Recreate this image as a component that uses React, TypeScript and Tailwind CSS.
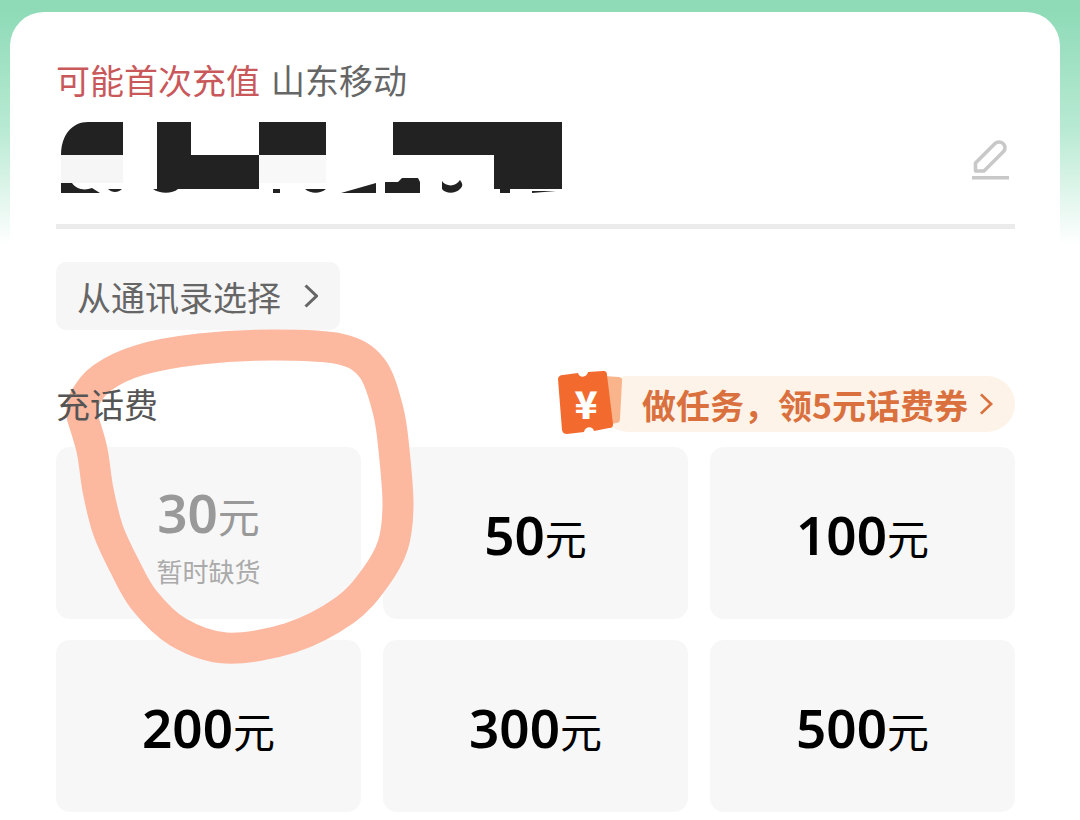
const cjk = "font-['Noto_Sans_CJK_SC','Noto_Sans',sans-serif]"

const amounts = [
  { value: '30', note: '暂时缺货' },
  { value: '50' },
  { value: '100' },
  { value: '200' },
  { value: '300' },
  { value: '500' },
]

// hand-drawn ring, traced from the marker stroke
const ringPoints = [
  [82, 416], [92, 450], [98, 490], [108, 530], [124, 565], [144, 600], [178, 632], [226, 648], [290, 638], [345, 610],
  [375, 578], [393, 545], [398, 505], [394, 450], [388, 410], [372, 368], [340, 349], [273, 345], [200, 349], [140, 360], [102, 378], [84, 400], [82, 416],
]

function smoothPath(pts: number[][]) {
  let d = `M${pts[0][0]} ${pts[0][1]}`
  for (let i = 0; i < pts.length - 1; i++) {
    const p0 = pts[Math.max(i - 1, 0)]
    const p1 = pts[i]
    const p2 = pts[i + 1]
    const p3 = pts[Math.min(i + 2, pts.length - 1)]
    d += ` C${p1[0] + (p2[0] - p0[0]) / 6} ${p1[1] + (p2[1] - p0[1]) / 6} ${p2[0] - (p3[0] - p1[0]) / 6} ${p2[1] - (p3[1] - p1[1]) / 6} ${p2[0]} ${p2[1]}`
  }
  return d
}

function Redacted() {
  return (
    <svg width="501" height="72" viewBox="61 122 501 72" className="block">
      <rect x="61" y="155" width="62" height="28" fill="#f6f6f6" />
      <rect x="259" y="155" width="67" height="28" fill="#f8f8f8" />
      <path d="M123 122H88C72 122 61 135 61 155H123Z" fill="#222" />
      <path d="M157 122H191V155H259V122H326V155H259V189H157Z" fill="#222" />
      <path d="M393 122H562V189H494V155H393Z" fill="#222" />
      <path d="M61 183H72C76 189 84 191 92 188L100 193H61Z" fill="#222" />
      <path d="M108 189H122C118 193 112 193 108 189Z" fill="#222" />
      <path d="M153 189H178C172 194 160 194 153 189Z" fill="#222" />
      <rect x="273" y="189" width="7" height="4" fill="#222" />
      <path d="M305 189H326C320 194 311 194 305 189Z" fill="#222" />
      <path d="M341 193L376 183V193Z" fill="#222" />
      <path d="M385 182H398L402 178H418L420 182H420V193H385Z" fill="#222" />
      <path d="M442 181C446 187 456 187 460 180C463 184 463 186 460 189C455 194 446 194 442 189Z" fill="#222" />
      <path d="M500 189L510 186V193H500Z" fill="#222" />
      <path d="M532 191H556L532 193Z" fill="#222" />
    </svg>
  )
}

function Pencil() {
  return (
    <svg width="38" height="40" viewBox="0 0 38 40" fill="none" className="block">
      <path d="M3.5 23L23 3.5C25 1.5 29 1.5 31 3.5L31.5 4C33.5 6 33.5 9.5 31.5 11.5L12 31H3.5Z" stroke="#c8c8c8" strokeWidth="3.6" strokeLinejoin="round" />
      <rect x="0" y="36" width="37" height="3.5" fill="#c8c8c8" />
    </svg>
  )
}

function Chevron({ color, w, h }: { color: string; w: number; h: number }) {
  return (
    <svg width={w} height={h} viewBox="0 0 14 24" fill="none" className="block">
      <path d="M1.5 1.5L12.5 12L1.5 22.5" stroke={color} strokeWidth="3" />
    </svg>
  )
}

function Ticket() {
  return (
    <div className="absolute left-[-44px] top-[-7px] h-[68px] w-[68px]">
      <svg width="68" height="68" viewBox="0 0 68 68" className="block">
        <path d="M48 7L63 8Q67 9 66 12L64 50Q64 54 60 54L52 56Z" fill="#f9b48c" />
        <path
          d="M7 6L22 4C23 9 31 9 32 3L47 2C50 2 51 3 51 6L57 55C57 58 56 59 53 59L38 62C37 57 29 57 28 63L11 65C8 65 7 64 6 61L2 10C2 8 4 6 7 6Z"
          fill="#f26a2e"
        />
      </svg>
      <span className="absolute left-[6px] top-[4px] flex h-[60px] w-[48px] items-center justify-center text-[38px] leading-[60px] font-black text-white">
        ¥
      </span>
    </div>
  )
}

export default function App() {
  return (
    <div className={`${cjk} relative h-[820px] w-[1080px] overflow-hidden bg-[linear-gradient(#8fdbb8,#8fdbb8_12px,#b9ead3_130px,#ffffff_245px)] pt-3`}>
      <div className="ml-[10px] mr-[20px] h-[808px] rounded-t-[34px] bg-white pl-[46px] pr-[45px] pt-[43px]">
        <div className="flex h-[50px] items-center gap-[11px] text-[34px] leading-[50px]">
          <span className="text-[#c9585b]">可能首次充值</span>
          <span className="text-[#666666]">山东移动</span>
        </div>

        <div className="mt-[17px] flex h-[72px] items-start justify-between pr-[5px]">
          <div className="pl-[5px]">
            <Redacted />
          </div>
          <div className="mt-[18px]">
            <Pencil />
          </div>
        </div>

        <div className="mt-[30px] h-[5px] bg-[#ebebeb]" />

        <button type="button" className="mt-[33px] flex h-[68px] w-[284px] items-center gap-[23px] rounded-[10px] bg-[#f6f6f6] pl-[21px] text-[34px] text-[#666666]">
          从通讯录选择
          <Chevron color="#666666" w={14} h={24} />
        </button>

        <div className="mt-[46px] flex h-[56px] items-center justify-between">
          <span className="relative z-10 text-[34px] leading-[56px] text-[#555555]">充话费</span>
          <div className="relative flex h-[56px] w-[415px] items-center rounded-full bg-[#fdf3e8] pl-[42px]">
            <Ticket />
            <span className="text-[34px] font-semibold text-[#d9703d]">做任务，领5元话费券</span>
            <span className="ml-[11px]">
              <Chevron color="#d9703d" w={14} h={22} />
            </span>
          </div>
        </div>

        <div className="mt-[15px] grid grid-cols-3 gap-x-[22px] gap-y-[21px]">
          {amounts.map((a) => (
            <div key={a.value} className="flex h-[172px] flex-col items-center justify-center rounded-[14px] bg-[#f7f7f7] pt-[6px]">
              <div className={`flex items-baseline leading-[60px] ${a.note ? 'text-[#999999]' : 'text-black'}`}>
                <span className="font-['Noto_Sans'] text-[53px] font-semibold">{a.value}</span>
                <span className="text-[42px]">元</span>
              </div>
              {a.note && <div className="mt-[8px] text-[26px] leading-[36px] text-[#aaaaaa]">{a.note}</div>}
            </div>
          ))}
        </div>
      </div>

      <svg width="1080" height="820" viewBox="0 0 1080 820" fill="none" className="pointer-events-none absolute left-0 top-0 z-[5]">
        <path d={smoothPath(ringPoints)} stroke="#fdb8a0" strokeWidth="31" strokeLinecap="round" strokeLinejoin="round" />
      </svg>
    </div>
  )
}
